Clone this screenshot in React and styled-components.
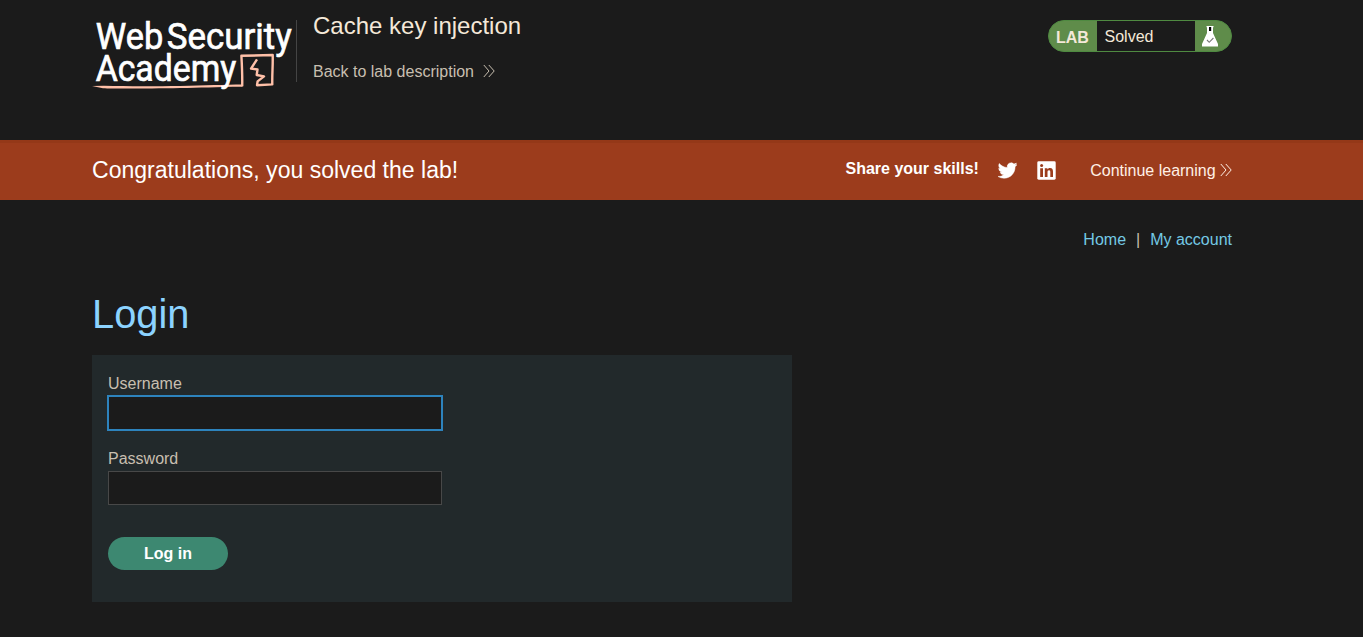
import React from "react"
import styled, { createGlobalStyle } from "styled-components"

const GlobalStyle = createGlobalStyle`
  * {
    box-sizing: border-box;
  }
  body {
    margin: 0;
    background: #1b1b1b;
    color: #c8bfb0;
    font-family: "Liberation Sans", Arial, sans-serif;
    font-size: 16px;
    line-height: 20px;
    overflow: hidden;
  }
  a {
    color: inherit;
    text-decoration: none;
  }
`

const Logo = () => (
  <svg width="205" height="75" viewBox="92 17 205 75" fill="none" overflow="visible">
    <path
      d="M92 86.1 L104 85.8 C130 86.5 160 86.2 180 86 C205 85.3 225 84.6 242.6 84.4 V86.8 C215 86.9 200 88 180 88 C150 88.6 115 88.8 103 88.3z"
      fill="#ffc0a8"
    />
    <path
      d="M242.2 86.3 C242.4 76 242 66 241.4 55.8 L272.7 55 C273 65 272 75 272.3 84.4 L257 85.2 L257.6 81.4 L264 76.4 L256.7 75 L257.5 69.5 L251 68.6 L257 59.4"
      stroke="#ffc0a8"
      strokeWidth="2.4"
      strokeLinejoin="round"
    />
    <LogoText x="95.7" y="48.5" textLength="67.5" lengthAdjust="spacingAndGlyphs">
      Web
    </LogoText>
    <LogoText x="166.7" y="48.5" textLength="125" lengthAdjust="spacingAndGlyphs">
      Security
    </LogoText>
    <LogoText x="95.7" y="81.2" textLength="140.5" lengthAdjust="spacingAndGlyphs">
      Academy
    </LogoText>
  </svg>
)

const Chevrons = () => (
  <svg width="12" height="14" viewBox="0 0 12 14" fill="none">
    <path d="M0.8 1 L6 7 L0.8 13 M5.8 1 L11.2 7 L5.8 13" stroke="currentColor" />
  </svg>
)

const Flask = () => (
  <svg width="16" height="21" viewBox="0 0 16 21">
    <path d="M4.5 0h7v1.3H11V7l5 11v2.5H0V18L5 7V1.3h-.5z" fill="#fff" />
    <path d="M7 1h2.2v4H7z" fill="#000" />
    <path d="M5 14l2.2 2.3L11.4 12" fill="none" stroke="#777" strokeWidth="1.1" />
  </svg>
)

const Twitter = () => (
  <svg width="19" height="19" viewBox="0 0 24 24" fill="#fff" stroke="#fff" strokeWidth="0.6">
    <path d="M23.95 4.57a10 10 0 01-2.82.77 4.96 4.96 0 002.16-2.72c-.95.55-2 .96-3.13 1.18a4.92 4.92 0 00-8.38 4.48C7.69 8.1 4.07 6.13 1.64 3.16a4.82 4.82 0 00-.67 2.48c0 1.71.87 3.21 2.19 4.1a4.9 4.9 0 01-2.23-.62v.06a4.92 4.92 0 003.95 4.83 5 5 0 01-2.21.08 4.94 4.94 0 004.6 3.42A9.87 9.87 0 010 19.54a13.99 13.99 0 007.56 2.21c9.05 0 14-7.5 14-13.98 0-.21 0-.42-.02-.63a9.94 9.94 0 002.46-2.55z" />
  </svg>
)

const Linkedin = () => (
  <svg width="19" height="19" viewBox="0 0 19 19">
    <rect x="0.3" y="0.3" width="18.4" height="18.4" rx="1.4" fill="#fff" />
    <path
      d="M3.2 7.2H6V16H3.2zM7.8 7.2h2.6v1.2c.5-.8 1.4-1.4 2.6-1.4 2.4 0 3 1.6 3 3.8V16h-2.7v-4.7c0-1.1-.1-2-1.3-2s-1.5.9-1.5 2V16H7.8z"
      fill="#9c3c1c"
    />
    <circle cx="4.6" cy="4.5" r="1.5" fill="#9c3c1c" />
  </svg>
)

const App = () => {
  return (
    <>
      <GlobalStyle />
      <Header>
        <Logo />
        <Heading>
          <h2>Cache key injection</h2>
          <a href="#lab">
            Back to lab description
            <Chevrons />
          </a>
        </Heading>
        <Status>
          <b>LAB</b>
          <p>Solved</p>
          <span>
            <Flask />
          </span>
        </Status>
      </Header>
      <Banner>
        <h4>Congratulations, you solved the lab!</h4>
        <Share>
          <b>Share your skills!</b>
          <Twitter />
          <Linkedin />
        </Share>
        <Continue href="#learn">
          Continue learning
          <Chevrons />
        </Continue>
      </Banner>
      <Main>
        <Nav>
          <a href="#home">Home</a>
          <span>|</span>
          <a href="#account">My account</a>
        </Nav>
        <h1>Login</h1>
        <Form onSubmit={e => e.preventDefault()}>
          <label htmlFor="username">Username</label>
          <Input id="username" $active />
          <label htmlFor="password">Password</label>
          <Input id="password" type="password" />
          <Button>Log in</Button>
        </Form>
      </Main>
    </>
  )
}

const LogoText = styled.text`
  fill: #fff;
  stroke: #fff;
  stroke-width: 0.7px;
  font-family: Roboto, sans-serif;
  font-size: 37.5px;
  font-weight: 400;
`

const Header = styled.header`
  display: flex;
  align-items: flex-start;
  width: 1232px;
  height: 140px;
  padding: 17px 0 0 92px;
  > svg {
    flex: none;
  }
`

const Heading = styled.div`
  height: 62px;
  margin: 3px 0 0 -1px;
  padding-left: 16px;
  border-left: 1px solid #444;
  h2 {
    margin: -8px 0 0;
    color: #f4e8d8;
    font-size: 24px;
    font-weight: 400;
    line-height: 28px;
  }
  a {
    display: flex;
    align-items: center;
    gap: 9px;
    margin-top: 22px;
  }
  svg {
    margin-top: -2px;
  }
`

const Status = styled.div`
  display: flex;
  width: 184px;
  height: 32px;
  margin: 3px 0 0 auto;
  border: 1px solid #4f8a41;
  border-radius: 16px;
  background: #5f8c4a;
  color: #f4e8d8;
  line-height: 30px;
  overflow: hidden;
  b {
    width: 48px;
    padding: 2px 0 0 7px;
  }
  p {
    width: 98px;
    margin: 0;
    padding: 1px 0 0 7.5px;
    background: #1b1b1b;
    line-height: 29px;
  }
  span {
    padding: 5px 0 0 7px;
    line-height: 0;
  }
`

const Banner = styled.section`
  display: flex;
  align-items: center;
  height: 60px;
  padding-left: 92px;
  border-top: 3px solid #943818;
  background: #9c3c1c;
  color: #fff;
  h4 {
    width: 753.5px;
    margin: 0;
    padding-bottom: 3px;
    font-size: 23.04px;
    font-weight: 400;
    line-height: 28px;
  }
`

const Share = styled.div`
  display: flex;
  align-items: center;
  width: 244.7px;
  b {
    margin: -5px 19px 0 0;
  }
  svg + svg {
    margin-left: 20px;
  }
  svg {
    margin-top: -3px;
  }
`

const Continue = styled.a`
  display: flex;
  align-items: center;
  gap: 4.5px;
  padding-bottom: 1px;
  color: #fff0e6;
  svg {
    margin-top: -2px;
  }
`

const Main = styled.main`
  width: 1232px;
  padding: 30px 0 0 92px;
  h1 {
    margin: 40px 0 17px;
    color: #8cd3ff;
    font-size: 39.8px;
    font-weight: 400;
    line-height: 48px;
  }
`

const Nav = styled.nav`
  display: flex;
  justify-content: flex-end;
  gap: 10px;
  color: #c8bfb0;
  a {
    color: #74c9e5;
  }
`

const Form = styled.form`
  width: 700px;
  height: 247px;
  padding: 19px 16px;
  background: #22292b;
  label {
    display: block;
    height: 22px;
  }
`

const Input = styled.input`
  display: block;
  width: 334px;
  height: 34px;
  margin-bottom: 19px;
  padding: 0 8px;
  border: 1px solid ${({ $active }) => ($active ? "#2d83bd" : "#484848")};
  box-shadow: ${({ $active }) => ($active ? "0 0 0 1px #2d83bd" : "none")};
  outline: none;
  background: #1b1b1b;
  color: #f4e8d8;
  font: inherit;
`

const Button = styled.button`
  display: block;
  width: 120px;
  height: 33px;
  margin-top: 32px;
  padding: 0;
  border: 0;
  border-radius: 17px;
  background: #3d8871;
  color: #fff;
  font: bold 16px "Liberation Sans", Arial, sans-serif;
`

export default App
